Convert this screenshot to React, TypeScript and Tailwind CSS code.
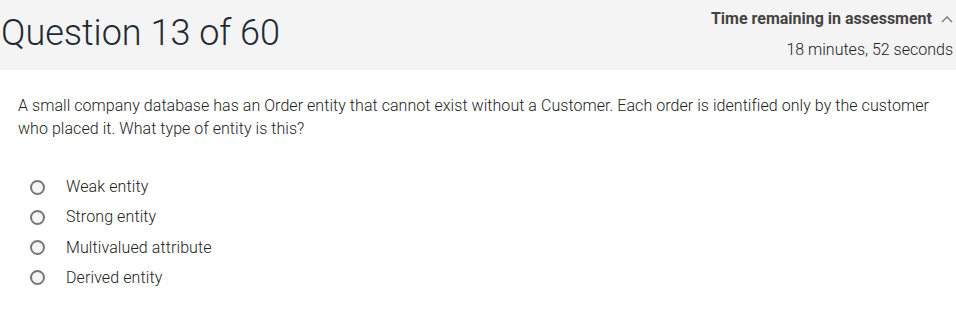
import React from 'react';

const options = ['Weak entity', 'Strong entity', 'Multivalued attribute', 'Derived entity'];

export default function App() {
  return (
    <div className="w-[956px] h-[311px] bg-white overflow-hidden" style={{ fontFamily: 'Roboto, "Liberation Sans", sans-serif' }}>
      {/* Header */}
      <div className="h-[70px] bg-[#f4f4f4] flex justify-between">
        <h1 className="pl-[1px] pt-[11px] text-[36px] leading-[44px] font-light text-[#1f2933]">Question 13 of 60</h1>
        <div className="flex flex-col items-end pr-[3px] pt-[8px]">
          <div className="flex items-center gap-[9px] text-[16px] leading-[22px] font-bold text-[#444]">
            <span>Time remaining in assessment</span>
            <svg width="12" height="8" viewBox="0 0 12 8" fill="none" stroke="#777" strokeWidth="1.4">
              <path d="M1 7 L6 2 L11 7" />
            </svg>
          </div>
          <div className="mt-[9px] text-[16px] leading-[22px] font-light text-[#222]">18 minutes, 52 seconds</div>
        </div>
      </div>

      {/* Question */}
      <p className="pl-[18px] pr-[20px] pt-[24px] text-[16px] leading-[23px] font-light tracking-[0.05px] text-[#222]">
        A small company database has an Order entity that cannot exist without a Customer. Each order is identified only by the customer who placed it. What type of entity is this?
      </p>

      <div className="mt-[37px] pl-[30px] flex flex-col gap-[10.3px]">
        {options.map((o) => (
          <label key={o} className="flex items-center h-[20px] text-[16px] font-light tracking-[0.1px] text-[#222]">
            <span className="w-[15px] h-[15px] rounded-full border-2 border-[#777] bg-[#f5f5f5]" />
            <span className="ml-[21px]">{o}</span>
          </label>
        ))}
      </div>
    </div>
  );
}
